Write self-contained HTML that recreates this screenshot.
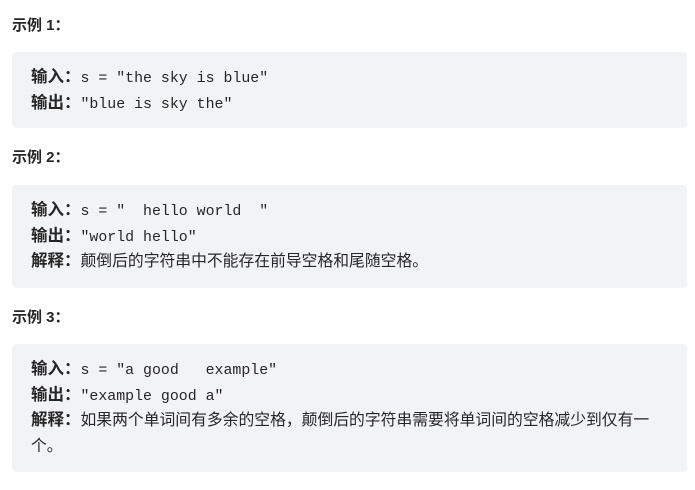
<!DOCTYPE html>
<html><head><meta charset="utf-8"><style>
html,body{margin:0;padding:0;background:#fff;width:695px;height:490px;overflow:hidden}
body{font-family:"Liberation Sans","Noto Sans CJK SC",sans-serif;color:#262626}
h4{position:absolute;left:12px;margin:0;font-size:15px;font-weight:bold;line-height:20px;color:#262626}
.box{position:absolute;left:12px;width:675px;background:#f2f3f5;border-radius:4px;box-sizing:border-box;padding:13px 19px}
.l{font-family:"Liberation Mono","Noto Sans CJK SC",monospace;font-size:14.9px;line-height:25.5px;height:25.5px;overflow:hidden;white-space:pre;color:#262626}
.l b{font-family:"Liberation Sans","Noto Sans CJK SC",sans-serif;font-weight:bold;font-size:16.5px}
.c{font-family:"Liberation Sans","Noto Sans CJK SC",sans-serif;font-size:15.8px}
</style></head><body>
<h4 style="top:16px">示例 1：</h4>
<div class="box" style="top:52px;height:76px">
<div class="l"><b>输入：</b>s = "the sky is blue"</div>
<div class="l"><b>输出：</b>"blue is sky the"</div>
</div>
<h4 style="top:148px">示例 2：</h4>
<div class="box" style="top:185px;height:103px">
<div class="l"><b>输入：</b>s = "  hello world  "</div>
<div class="l"><b>输出：</b>"world hello"</div>
<div class="l"><b>解释：</b><span class="c">颠倒后的字符串中不能存在前导空格和尾随空格。</span></div>
</div>
<h4 style="top:308px">示例 3：</h4>
<div class="box" style="top:344px;height:128px">
<div class="l"><b>输入：</b>s = "a good   example"</div>
<div class="l"><b>输出：</b>"example good a"</div>
<div class="l"><b>解释：</b><span class="c">如果两个单词间有多余的空格，颠倒后的字符串需要将单词间的空格减少到仅有一</span></div>
<div class="l"><span class="c">个。</span></div>
</div>
</body></html>
